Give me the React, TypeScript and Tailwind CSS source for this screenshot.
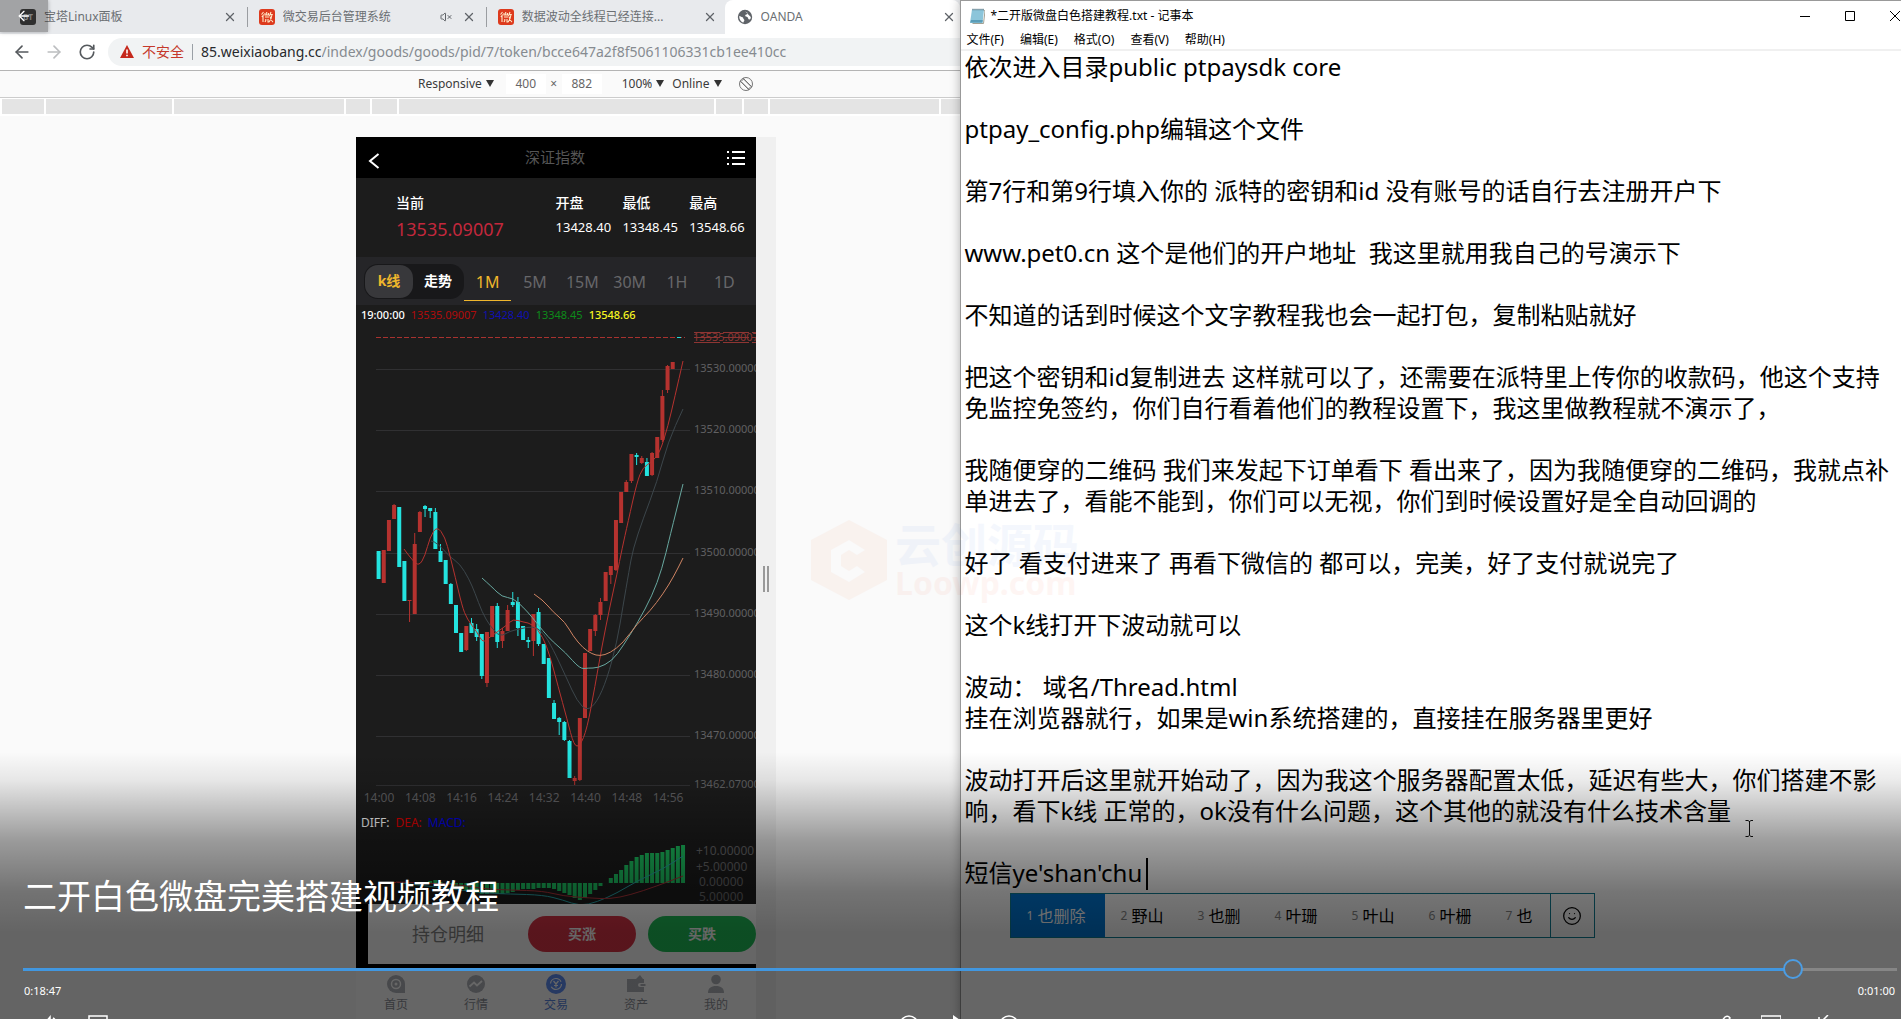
import React from "react";
import {
  ArrowLeft,
  ArrowRight,
  RotateCw,
  X,
  VolumeX,
  Smile,
} from "lucide-react";

const STEP = 5.16;
const X0 = 378.6;

// [direction, body top, body bottom, wick top, wick bottom]
type Candle = ["u" | "d", number, number, number, number];

const candles: Candle[] = [
  ["d", 552, 580, 552, 580],
  ["u", 551, 584, 551, 584],
  ["u", 521, 552, 521, 552],
  ["u", 506, 520, 505, 520],
  ["d", 508, 568, 508, 568],
  ["d", 562, 602, 562, 602],
  ["u", 601, 602, 601, 623],
  ["u", 545, 615, 534, 615],
  ["u", 513, 533, 512, 533],
  ["d", 507, 510, 506, 518],
  ["d", 509, 512, 509, 519],
  ["d", 513, 550, 509, 550],
  ["d", 552, 563, 545, 563],
  ["d", 561, 585, 561, 585],
  ["d", 585, 605, 584, 605],
  ["d", 606, 634, 606, 634],
  ["d", 634, 653, 634, 653],
  ["u", 627, 651, 627, 652],
  ["d", 624, 634, 619, 634],
  ["d", 630, 638, 625, 642],
  ["d", 635, 677, 635, 680],
  ["u", 633, 684, 633, 688],
  ["u", 607, 638, 607, 638],
  ["d", 607, 643, 604, 649],
  ["u", 632, 642, 629, 649],
  ["u", 611, 632, 606, 632],
  ["d", 603, 606, 593, 608],
  ["d", 603, 629, 598, 637],
  ["d", 627, 641, 627, 641],
  ["d", 641, 643, 638, 649],
  ["u", 615, 642, 615, 657],
  ["d", 613, 645, 609, 647],
  ["d", 645, 665, 645, 665],
  ["d", 659, 699, 659, 699],
  ["d", 704, 720, 701, 720],
  ["d", 719, 723, 718, 736],
  ["d", 723, 741, 722, 742],
  ["d", 742, 779, 741, 779],
  ["u", 779, 782, 777, 786],
  ["u", 719, 781, 719, 782],
  ["u", 654, 719, 654, 719],
  ["u", 630, 652, 630, 652],
  ["u", 616, 632, 615, 637],
  ["u", 603, 616, 599, 621],
  ["u", 573, 602, 573, 602],
  ["u", 567, 576, 567, 585],
  ["u", 521, 571, 521, 572],
  ["u", 493, 524, 493, 524],
  ["u", 483, 493, 481, 493],
  ["u", 455, 482, 455, 484],
  ["d", 456, 458, 454, 466],
  ["u", 459, 464, 457, 465],
  ["d", 463, 477, 459, 477],
  ["u", 454, 476, 453, 477],
  ["u", 438, 459, 438, 459],
  ["u", 397, 441, 391, 443],
  ["u", 367, 391, 366, 394],
  ["u", 363, 370, 363, 370],
];

const ma5 = [404, 550, 412, 561, 419, 567, 425, 557, 430, 538, 437, 527, 445, 538, 450, 557, 455, 577, 462, 607, 467, 620, 477, 633, 483, 644, 490, 638, 497, 633, 507, 626, 513, 620, 523, 623, 533, 625, 543, 638, 550, 657, 558, 687, 567, 720, 574, 747, 580, 747, 587, 730, 595, 687, 602, 647, 610, 607, 617, 575, 622, 550, 628, 523, 637, 483, 643, 468, 652, 463, 660, 453, 668, 427, 675, 397, 683, 362];
const ma10 = [431, 542, 434, 542, 443, 550, 450, 558, 460, 565, 469, 580, 475, 594, 482, 613, 490, 627, 500, 638, 510, 632, 520, 630, 533, 627, 543, 633, 553, 650, 567, 680, 577, 702, 587, 712, 597, 703, 607, 680, 617, 643, 623, 607, 629, 572, 633, 550, 643, 520, 657, 483, 668, 443, 683, 410];
const ma20 = [482, 579, 492, 588, 502, 598, 513, 599, 523, 608, 532, 618, 543, 632, 553, 643, 565, 653, 580, 670, 588, 669, 598, 669, 612, 662, 623, 647, 638, 623, 652, 597, 662, 570, 670, 537, 683, 485];
const ma30 = [534, 595, 543, 601, 553, 613, 565, 623, 573, 637, 583, 649, 592, 655, 600, 657, 610, 654, 623, 644, 637, 625, 650, 612, 663, 595, 674, 577, 683, 559];

const macdBars = [
  0, 0, 0, 1, 1, 0, 0, 0, 1, 1, 2, 3, 1, 0, -1, -3, -6, -8, -9, -10, -11, -11, -10, -11, -11, -10, -9, -7, -6, -6, -6,
  -5, -5, -5, -6, -8, -10, -12, -15, -17, -15, -11, -7, -3, 0, 5, 9, 13, 18, 22, 26, 28, 30, 30, 30, 31, 33, 35, 37, 38,
];
const diffLine = [400, 884, 455, 890, 480, 894, 510, 895, 543, 896, 563, 901, 580, 907, 597, 903, 617, 894, 637, 882, 663, 870, 683, 857];
const deaLine = [396, 883, 457, 885, 483, 890, 510, 891, 543, 892, 563, 897, 590, 899, 610, 900, 630, 896, 657, 887, 683, 877];

const gridLines: [number, string][] = [
  [370, "13530.00000"],
  [431, "13520.00000"],
  [492, "13510.00000"],
  [554, "13500.00000"],
  [615, "13490.00000"],
  [676, "13480.00000"],
  [737, "13470.00000"],
  [786, "13462.07000"],
];

const times = ["14:00", "14:08", "14:16", "14:24", "14:32", "14:40", "14:48", "14:56"];

function smooth(p: number[]): string {
  let d = `M${p[0]} ${p[1]}`;
  for (let i = 2; i < p.length - 2; i += 2) {
    d += ` Q${p[i]} ${p[i + 1]} ${(p[i] + p[i + 2]) / 2} ${(p[i + 1] + p[i + 3]) / 2}`;
  }
  return d + ` L${p[p.length - 2]} ${p[p.length - 1]}`;
}

function CandleChart() {
  return (
    <svg viewBox="356 326 400 486" className="block h-[486px] w-full" role="img" aria-label="K线图">
      {gridLines.map(([y, label]) => (
        <g key={label}>
          <path d={`M376 ${y + 0.5}H690`} stroke="#303032" />
          <text x="694" y={y + 3} fontSize="11" fill="#606062">
            {label}
          </text>
        </g>
      ))}
      <path d="M376 338.5H685" stroke="#a8322f" strokeDasharray="5 2" />
      <path d="M677 338.5h4" stroke="#22e0dc" />
      <text x="693" y="342" fontSize="11" fill="#8e3533">
        13535.09007
      </text>
      <path d="M694 333.5H756M694 338.5H756M694 343.5H756" stroke="#8e3533" strokeDasharray="26 3" />
      {candles.map(([dir, top, bottom, wickTop, wickBottom], i) => {
        const x = X0 + i * STEP;
        const color = dir === "u" ? "#b5322f" : "#24e3df";
        return (
          <g key={i} fill={color}>
            <rect x={x - 0.5} y={wickTop} width="1" height={wickBottom - wickTop} />
            <rect x={x - 2} y={top} width="4" height={bottom - top} />
          </g>
        );
      })}
      <g fill="none">
        <path d={smooth(ma10)} stroke="#3c464b" />
        <path d={smooth(ma5)} stroke="#b5322f" />
        <path d={smooth(ma20)} stroke="#68a8a0" />
        <path d={smooth(ma30)} stroke="#cf8463" />
      </g>
      {times.map((t, i) => (
        <text key={t} x={379 + i * 41.3} y="803" fontSize="12" fill="#5e5e60" textAnchor="middle">
          {t}
        </text>
      ))}
    </svg>
  );
}

function MacdChart() {
  return (
    <svg viewBox="356 834 400 71" className="block h-[71px] w-full" role="img" aria-label="MACD">
      {macdBars.map((v, i) => (
        <rect
          key={i}
          x={X0 + i * STEP - 2}
          y={v > 0 ? 884 - v : 884}
          width="4"
          height={Math.abs(v)}
          fill={i > 1 && i < 5 ? "#c8303a" : "#1dc763"}
        />
      ))}
      <path d={smooth(diffLine)} fill="none" stroke="#2aa9ad" />
      <path d={smooth(deaLine)} fill="none" stroke="#b0343a" />
      <g fontSize="12" fill="#6a6a6c">
        <text x="696" y="856">+10.00000</text>
        <text x="696" y="872">+5.00000</text>
        <text x="699" y="887">0.00000</text>
        <text x="699" y="902">5.00000</text>
      </g>
    </svg>
  );
}

function WeiIcon() {
  return (
    <svg viewBox="0 0 16 16" className="mb-1 size-4 shrink-0">
      <rect width="16" height="16" rx="3" fill="#dd3a1d" />
      <path
        d="M4.5 3 2.5 5.5M4.8 5.5 2.8 8M4 7v6M6 4v2h3.5V4M7.7 3v3M6 8h4M6.8 10v1.5L6 13M9 10v3h1M12 3l-1.5 4M11 5.5h2.8M13 5.5c-.3 3-1 5.5-3 7.500M11 7.500c.5 2.500 1.500 4.500 3 5.500"
        stroke="#ffe9c8"
        strokeWidth="1.100"
        fill="none"
      />
    </svg>
  );
}

function Tab({
  icon,
  title,
  muted,
  divider,
  className,
}: {
  icon: React.ReactNode;
  title: string;
  muted?: boolean;
  divider?: boolean;
  className: string;
}) {
  return (
    <div className={`flex h-[34px] min-w-0 items-center pt-1 ${className}`}>
      {icon}
      <button className="mb-1 ml-2 min-w-0 flex-1 truncate text-left text-xs leading-6 text-[#6b6f73]">{title}</button>
      {muted && <VolumeX className="mb-1 mr-2.5 size-3 shrink-0 text-[#5f6368]" aria-label="静音" />}
      <button aria-label="关闭标签页" className="mb-1 shrink-0 text-[#5f6368]">
        <X className="size-3.5" strokeWidth={2.2} />
      </button>
      {divider && <span className="mb-1 ml-2.5 h-5 w-px bg-[#9a9da1]" />}
    </div>
  );
}

function ToolbarSelect({ value, label, className }: { value: string; label: string; className: string }) {
  return (
    <label className={`flex items-center gap-1 ${className}`}>
      <select aria-label={label} className="appearance-none bg-transparent [field-sizing:content]">
        <option>{value}</option>
      </select>
      <svg viewBox="0 0 8 7" className="h-[7px] w-2">
        <path d="M0 0h8L4 7z" fill="#333" />
      </svg>
    </label>
  );
}

function Browser() {
  return (
    <section className="flex min-w-0 flex-[960] flex-col bg-[#fafafa]">
      <div className="grid h-[34px] grid-cols-[248fr_239fr_238fr_235fr] bg-[#e8eaed]">
        <Tab
          className="pl-5"
          title="宝塔Linux面板"
          divider
          icon={
            <span className="mb-1 flex size-4 shrink-0 items-center justify-center rounded-[3px] bg-[#444] text-[8px] font-bold text-[#bbb]">
              BT
            </span>
          }
        />
        <Tab className="pl-[11px]" title="微交易后台管理系统" muted divider icon={<WeiIcon />} />
        <Tab className="pl-[11px] pr-2" title="数据波动全线程已经连接..." icon={<WeiIcon />} />
        <Tab
          className="rounded-t-lg bg-white pl-3 pr-1"
          title="OANDA"
          icon={
            <svg viewBox="0 0 16 16" className="mb-1 size-4 shrink-0">
              <circle cx="8" cy="8" r="7.200" fill="#5f6368" />
              <path d="M8 2.200c1.500 1.300 2.800 1 2.600 2.400-.3 1.200-2.200.8-2.400 2-.2 1.300 1.600 1 2.400 1.700.9.9.3 2.200 1.800 2.100 1 0 1.400-1 1.400-2.400M2.200 7c1.200.2 2 1 3.400 1.200.9.400.5 1.500 1.200 2 .8.500.7 1.600 0 2.200-.4.400-.5 1-.5 1.300-2.400-.9-4.300-3.400-4.100-6.700z" fill="#fff" />
            </svg>
          }
        />
      </div>

      <div className="flex h-[37px] items-center border-b border-[#b4b4b4] bg-white">
        <button aria-label="后退" className="ml-3 text-[#55595d]">
          <ArrowLeft className="size-5" strokeWidth={2} />
        </button>
        <button aria-label="前进" className="ml-3 text-[#bcbec0]">
          <ArrowRight className="size-5" strokeWidth={2} />
        </button>
        <button aria-label="重新加载" className="ml-3.5 text-[#55595d]">
          <RotateCw className="size-[18px]" strokeWidth={2.2} />
        </button>
        <div className="ml-3 flex h-7 min-w-0 flex-1 items-center rounded-l-full bg-[#f1f3f4] pl-3 text-sm">
          <svg viewBox="0 0 14 13" className="h-[13px] w-3.5">
            <path d="M7 0l7 13H0z" fill="#c5281c" />
            <path d="M6.200 4.500h1.600v4H6.200zM6.200 9.800h1.600v1.500H6.200z" fill="#fff" />
          </svg>
          <span className="ml-2 text-[#c5392c]">不安全</span>
          <span className="mx-2 h-4 w-px bg-[#9aa0a6]" />
          <label htmlFor="url" className="text-[#27292c]">
            85.weixiaobang.cc
          </label>
          <input
            id="url"
            className="min-w-0 flex-1 bg-transparent text-[#868b90] outline-none"
            defaultValue="/index/goods/goods/pid/7/token/bcce647a2f8f5061106331cb1ee410cc"
          />
        </div>
      </div>

      <div className="flex h-7 items-center border-b border-[#ccc] bg-[#fafafa] pl-[418px] text-xs text-[#3a3a3a]">
        <ToolbarSelect label="设备" value="Responsive" className="" />
        <input aria-label="宽度" defaultValue="400" className="ml-3 h-5 w-10 bg-white text-center text-[#666] outline-none" />
        <span className="w-4 text-center text-[#666]">×</span>
        <input aria-label="高度" defaultValue="882" className="h-5 w-10 bg-white text-center text-[#666] outline-none" />
        <ToolbarSelect label="缩放" value="100%" className="ml-5" />
        <ToolbarSelect label="网络" value="Online" className="ml-2" />
        <button aria-label="旋转" className="ml-4">
          <svg viewBox="0 0 16 16" className="size-4" fill="none" stroke="#777">
            <circle cx="8" cy="8" r="6.500" />
            <path d="M5.500 3 13 10.500 10.500 13 3 5.500zM5 2l9 9M2 5l9 9" />
          </svg>
        </button>
      </div>

      <div className="flex h-[18px] gap-0.5 overflow-hidden bg-white pb-0.5 pl-0.5 pt-px [&>i]:bg-[#e4e4e4]">
        <i className="w-[42px]" />
        <i className="w-[126px]" />
        <i className="w-[170px]" />
        <i className="w-[24px]" />
        <i className="w-[25px]" />
        <i className="w-[315px]" />
        <i className="w-[26px]" />
        <i className="w-[24px]" />
        <i className="w-[169px]" />
        <i className="flex-1" />
      </div>

      <div className="flex flex-1 pl-[356px] pt-[21px]">
        <Phone />
        <div className="relative h-[882px] w-5 bg-[#f0f0f0]">
          <div className="absolute left-[7px] top-[429px] h-[26px] w-1.5 border-x-2 border-[#999]" />
        </div>
      </div>
    </section>
  );
}

const periods = ["1M", "5M", "15M", "30M", "1H", "1D"];

function NavIcon({ name }: { name: string }) {
  const bg = "#b2b5bb";
  return (
    <svg viewBox="0 0 20 20" className="size-5">
      {name === "首页" && (
        <>
          <path d="M10 1a9 9 0 0 1 9 9v9h-9a9 9 0 0 1 0-18z" fill={bg} />
          <circle cx="10" cy="10" r="4.500" fill="none" stroke="#fff" strokeWidth="1.500" />
          <circle cx="10" cy="10" r="1.500" fill="#fff" />
        </>
      )}
      {name === "行情" && (
        <>
          <circle cx="10" cy="10" r="9" fill={bg} />
          <path d="M3.500 12.500 8 8.500l3 3 5-4.500" fill="none" stroke="#fff" strokeWidth="1.800" />
        </>
      )}
      {name === "交易" && (
        <>
          <circle cx="10" cy="10" r="10" fill="#5f8ff5" />
          <circle cx="10" cy="10" r="5.500" fill="none" stroke="#fff" strokeWidth="1.200" strokeDasharray="14 3.300" />
          <path d="M7.500 7 10 10l2.500-3M10 10v3.500M8 11.500h4" fill="none" stroke="#fff" strokeWidth="1.200" />
        </>
      )}
      {name === "资产" && (
        <>
          <path d="M1 5h9l4-4 3 4h1v4h-4a2 2 0 0 0 0 4h4v5H1z" fill={bg} />
          <path d="M14.500 10h5v2h-5z" fill={bg} />
        </>
      )}
      {name === "我的" && (
        <>
          <circle cx="10" cy="5.500" r="4.800" fill={bg} />
          <path d="M2 19c0-5 3-7 8-7s8 2 8 7z" fill={bg} />
        </>
      )}
    </svg>
  );
}

function Phone() {
  return (
    <div className="flex h-[882px] w-[400px] flex-col overflow-hidden bg-[#1c1c1c]">
      <header className="flex h-[41px] shrink-0 items-center justify-between bg-black px-2.5 text-white">
        <button aria-label="返回">
          <svg viewBox="0 0 18 18" className="mt-1.5 size-[18px]" fill="none" stroke="#fff" strokeWidth="2">
            <path d="M12.500 2 4 9l8.500 7" />
          </svg>
        </button>
        <h1 className="text-[15px] text-[#555]">深证指数</h1>
        <button aria-label="菜单">
          <svg viewBox="0 0 20 16" className="h-4 w-5" stroke="#fff" strokeWidth="2">
            <path d="M1 2h2M6 2h13M1 8h2M6 8h13M1 14h2M6 14h13" />
          </svg>
        </button>
      </header>

      <div className="flex h-[79px] shrink-0 pl-10 pt-[13px] text-white">
        <div className="w-40">
          <div className="text-sm font-medium leading-6">当前</div>
          <div className="text-lg leading-7 text-[#c3283c]">13535.09007</div>
        </div>
        {[
          ["开盘", "13428.40"],
          ["最低", "13348.45"],
          ["最高", "13548.66"],
        ].map(([k, v]) => (
          <div key={k} className="w-[67px]">
            <div className="text-sm font-medium leading-6">{k}</div>
            <div className="text-[13px] leading-6">{v}</div>
          </div>
        ))}
      </div>

      <div className="flex h-12 shrink-0 items-center bg-[#252528] pl-2">
        <div className="flex h-[35px] w-[100px] rounded-[14px] bg-[#18181a] p-px text-sm font-bold text-white">
          <button className="w-12 rounded-[13px] bg-[#38383b] text-[#efb62c]">k线</button>
          <button className="flex-1">走势</button>
        </div>
        <div className="flex h-full flex-1 items-start text-base">
          {periods.map((p, i) => (
            <button
              key={p}
              className={
                i === 0
                  ? "h-11 flex-1 border-b border-[#efb62c] pt-1.5 text-[#efb62c]"
                  : "h-11 flex-1 border-b border-transparent pt-1.5 text-[#67676a]"
              }
            >
              {p}
            </button>
          ))}
          <span className="w-2" />
        </div>
      </div>

      <div className="flex h-5 shrink-0 items-center gap-1.5 pl-[5px] text-[11px]">
        <span className="font-medium text-white">19:00:00</span>
        <span className="text-[#b00b0b]">13535.09007</span>
        <span className="text-[#1010b0]">13428.40</span>
        <span className="text-[#0d8a1a]">13348.45</span>
        <span className="font-medium text-[#f5f520]">13548.66</span>
      </div>
      <CandleChart />
      <div className="flex h-[22px] shrink-0 items-center gap-1.5 pl-[5px] pt-0.5 text-xs leading-5">
        <span className="text-white">DIFF:</span>
        <span className="text-[#e00000]">DEA:</span>
        <span className="text-[#0000e0]">MACD:</span>
      </div>
      <MacdChart />

      <div className="h-16 shrink-0 bg-black pb-1 pl-3">
        <div className="flex h-full items-center gap-3 bg-white">
          <button className="flex-1 pl-3 text-lg text-[#858585]">持仓明细</button>
          <button className="h-9 w-[108px] rounded-full bg-[#dd3447] text-sm font-bold text-white">买涨</button>
          <button className="h-9 w-[108px] rounded-full bg-[#1fc058] text-sm font-bold text-white">买跌</button>
        </div>
      </div>

      <nav className="flex flex-1 bg-white text-xs leading-5">
        {["首页", "行情", "交易", "资产", "我的"].map((n) => (
          <a
            key={n}
            href="#"
            className={
              n === "交易"
                ? "flex flex-1 flex-col items-center gap-px pt-1.5 text-[#5a86e0]"
                : "flex flex-1 flex-col items-center gap-px pt-1.5 text-[#8c8f97]"
            }
          >
            <NavIcon name={n} />
            {n}
          </a>
        ))}
      </nav>
    </div>
  );
}

const note = `依次进入目录public ptpaysdk core

ptpay_config.php编辑这个文件

第7行和第9行填入你的 派特的密钥和id 没有账号的话自行去注册开户下

www.pet0.cn 这个是他们的开户地址  我这里就用我自己的号演示下

不知道的话到时候这个文字教程我也会一起打包，复制粘贴就好

把这个密钥和id复制进去 这样就可以了，还需要在派特里上传你的收款码，他这个支持免监控免签约，你们自行看着他们的教程设置下，我这里做教程就不演示了，

我随便穿的二维码 我们来发起下订单看下 看出来了，因为我随便穿的二维码，我就点补单进去了，看能不能到，你们可以无视，你们到时候设置好是全自动回调的

好了 看支付进来了 再看下微信的 都可以，完美，好了支付就说完了

这个k线打开下波动就可以

波动： 域名/Thread.html
挂在浏览器就行，如果是win系统搭建的，直接挂在服务器里更好

波动打开后这里就开始动了，因为我这个服务器配置太低，延迟有些大，你们搭建不影响，看下k线 正常的，ok没有什么问题，这个其他的就没有什么技术含量

短信ye'shan'chu`;

const candidates = ["也删除", "野山", "也删", "叶珊", "叶山", "叶栅", "也"];

function Notepad() {
  return (
    <section className="relative z-10 flex min-w-0 flex-[941] flex-col border-l border-t border-[#999] bg-white shadow-[0_0_10px_rgba(0,0,0,0.3)]">
      <div className="flex h-[29px] shrink-0 items-center pl-2 text-xs">
        <svg viewBox="0 0 16 16" className="size-4">
          <path d="M3 1.500h12l-1.500 13.500H1z" fill="#8cc5da" />
          <path d="M2 12h11.800l-.4 2.500H1.200z" fill="#5a9db8" />
          <path d="M14.500 2 16 3l-1.500 12.500h-11" fill="none" stroke="#8a8a7a" strokeWidth=".8" />
          <path d="M3.500 1.500h11" stroke="#44616e" strokeDasharray="1 1" strokeWidth="1.500" />
        </svg>
        <h2 className="ml-1.5 flex-1">*二开版微盘白色搭建教程.txt - 记事本</h2>
        <div className="-mr-1 flex gap-[33px]">
          <button aria-label="最小化">
            <svg viewBox="0 0 12 12" className="size-3" stroke="#000">
              <path d="M1 6.500h10" />
            </svg>
          </button>
          <button aria-label="最大化">
            <svg viewBox="0 0 12 12" className="size-3" fill="none" stroke="#000">
              <path d="M1.500 1.500h9v9h-9z" />
            </svg>
          </button>
          <button aria-label="关闭" className="pr-1">
            <svg viewBox="0 0 12 12" className="size-3" stroke="#000">
              <path d="M1 1l10 10M11 1 1 11" />
            </svg>
          </button>
        </div>
      </div>
      <div className="flex h-[21px] shrink-0 items-center gap-4 border-b-2 border-[#f0f0f0] pl-1.5 text-xs leading-4">
        {["文件(F)", "编辑(E)", "格式(O)", "查看(V)", "帮助(H)"].map((m) => (
          <button key={m}>{m}</button>
        ))}
      </div>
      <textarea
        aria-label="文本编辑器"
        spellCheck={false}
        defaultValue={note}
        className="w-full flex-1 resize-none overflow-hidden pl-1 text-2xl leading-[31px] text-black outline-none"
      />
      <div className="absolute left-[185px] top-[857px] h-8 w-0.5 bg-black" />
      <div className="absolute left-[49px] top-[892px] flex h-[45px] w-[585px] border border-[#0f7f96] bg-white text-base">
        {candidates.map((c, i) => (
          <button
            key={i}
            className={
              i === 0
                ? "flex w-[94px] items-center gap-1 bg-[#0078d7] pl-4 text-white"
                : i === 6
                  ? "flex flex-1 items-center gap-1 pl-4"
                  : "flex w-[77px] items-center gap-1 pl-4"
            }
          >
            <span className={i === 0 ? "text-xs" : "text-xs text-[#888]"}>{i + 1}</span>
            {c}
          </button>
        ))}
        <button aria-label="表情" className="flex w-11 items-center justify-center border-l border-[#0f7f96]">
          <Smile className="size-5" strokeWidth={1.5} />
        </button>
      </div>
      <svg viewBox="0 0 8 17" className="absolute left-[784px] top-[819px] h-[17px] w-2" fill="none" stroke="#111">
        <path d="M.5.5h2.500l1.500 1 1.500-1H8M4.500 1v14M.5 16.500h2.500l1.500-1 1.500 1H8" />
      </svg>
    </section>
  );
}

function Watermark() {
  return (
    <div className="pointer-events-none absolute left-[811px] top-[520px] z-20 flex items-center gap-2 opacity-[0.05]">
      <svg viewBox="0 0 76 80" className="h-20 w-[76px]">
        <path
          d="M38 0 76 20v40L38 80 0 60V20z M54 30 38 20 20 30v22l18 10 16-10-8-6-8 5-8-5V35l8-5 8 5z"
          fill="#f26a2e"
          fillRule="evenodd"
        />
      </svg>
      <div className="font-bold">
        <div className="text-[46px] leading-[46px] text-[#3a78e0]">云创源码</div>
        <div className="text-[32px] leading-8 text-[#f0522e]">Loowp.com</div>
      </div>
    </div>
  );
}

function VideoControls() {
  return (
    <div className="absolute inset-x-0 bottom-0 z-30 flex h-[267px] flex-col justify-end bg-[linear-gradient(to_bottom,transparent_0,rgba(0,0,0,0.08)_28px,rgba(0,0,0,0.38)_88px,rgba(0,0,0,0.54)_140px,rgba(0,0,0,0.6)_180px)] text-white">
      <h2 className="pl-[23px] text-[34px] leading-[50px]">二开白色微盘完美搭建视频教程</h2>
      <div className="mt-[38px] flex pl-[23px] pr-1">
        <input
          type="range"
          aria-label="播放进度"
          min={0}
          max={1187}
          defaultValue={1127}
          className="m-0 h-5 w-full appearance-none bg-[linear-gradient(to_right,#4197e0_94%,#868686_94%)] bg-[length:100%_3px] bg-center bg-no-repeat [&::-webkit-slider-thumb]:size-5 [&::-webkit-slider-thumb]:appearance-none [&::-webkit-slider-thumb]:rounded-full [&::-webkit-slider-thumb]:border-2 [&::-webkit-slider-thumb]:border-[#4c9de3] [&::-webkit-slider-thumb]:bg-[#666]"
        />
      </div>
      <div className="mt-0.5 flex justify-between pl-6 pr-1.5 text-[11px] leading-5">
        <span>0:18:47</span>
        <span>0:01:00</span>
      </div>
      <div className="mt-3.5 flex h-1 items-start justify-between pl-10 pr-[72px]">
        <div className="flex gap-7">
          <button aria-label="音量">
            <svg viewBox="0 0 20 20" className="size-5" fill="none" stroke="#fff" strokeWidth="1.500">
              <path d="M2 8h3l5-6v16l-5-5H2zM13 3c5 3 5 11 0 14" />
            </svg>
          </button>
          <button aria-label="字幕">
            <svg viewBox="0 0 20 20" className="size-5" fill="none" stroke="#fff" strokeWidth="1.500">
              <path d="M1 1h18v14H1z" />
            </svg>
          </button>
        </div>
        <div className="flex gap-[30px] pl-24">
          <button aria-label="后退10秒">
            <svg viewBox="0 0 20 20" className="size-5" fill="none" stroke="#fff" strokeWidth="1.500">
              <circle cx="10" cy="10" r="9" />
            </svg>
          </button>
          <button aria-label="播放">
            <svg viewBox="0 0 20 20" className="size-5" fill="#fff">
              <path d="M4 0l14 10L4 20z" />
            </svg>
          </button>
          <button aria-label="前进30秒">
            <svg viewBox="0 0 20 20" className="size-5" fill="none" stroke="#fff" strokeWidth="1.500">
              <circle cx="10" cy="10" r="9" />
            </svg>
          </button>
        </div>
        <div className="flex gap-7">
          <button aria-label="编辑">
            <svg viewBox="0 0 20 20" className="size-5" fill="none" stroke="#fff" strokeWidth="1.500">
              <path d="M3 13 12 2q3-2 5 1L7 15z" />
            </svg>
          </button>
          <button aria-label="迷你视图">
            <svg viewBox="0 0 20 20" className="size-5" fill="none" stroke="#fff" strokeWidth="1.500">
              <path d="M0 1h20v14H0z" />
            </svg>
          </button>
          <button aria-label="全屏">
            <svg viewBox="0 0 20 20" className="size-5" fill="none" stroke="#fff" strokeWidth="1.500">
              <path d="M19 0 10 9M10 2v7h7" />
            </svg>
          </button>
        </div>
      </div>
    </div>
  );
}

export default function App() {
  return (
    <main className="relative flex h-screen overflow-hidden bg-white font-['Noto_Sans','Noto_Sans_CJK_SC',sans-serif] text-black">
      <Browser />
      <Notepad />
      <Watermark />
      <VideoControls />
      <button
        aria-label="返回上一页"
        className="absolute left-0 top-0 z-30 flex h-8 w-12 items-center justify-center bg-black/30 text-white shadow-[0_0_4px_rgba(0,0,0,0.3)]"
      >
        <ArrowLeft className="size-4" strokeWidth={2} />
      </button>
    </main>
  );
}
